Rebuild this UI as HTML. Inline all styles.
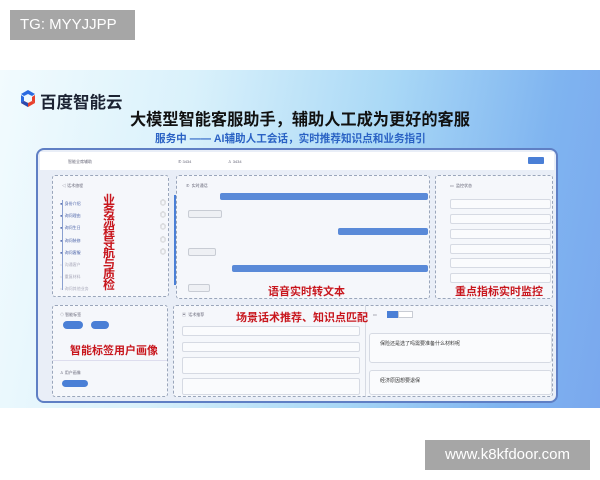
<!DOCTYPE html>
<html><head><meta charset="utf-8"><style>
*{margin:0;padding:0;box-sizing:border-box}
body{width:600px;height:480px;background:#fff;position:relative;overflow:hidden;font-family:"Liberation Sans","Noto Sans CJK SC",sans-serif}
.a{position:absolute}
.banner{left:0;top:70px;width:600px;height:338px;background:linear-gradient(100deg,#f2fbfe 0%,#d9f1fb 30%,#a9d8f6 60%,#7fb4f0 85%,#7aa8ee 100%)}
.dash{position:absolute;border:1px dashed #9aa6bb;background:#f5f7fb;border-radius:3px}
.sm{position:absolute;font-size:4px;color:#667}
.red{position:absolute;color:#c8161d;font-weight:bold;font-size:11px;white-space:nowrap}
.bub{position:absolute;background:#5a8ad8;height:7px;border-radius:2px}
.gb{position:absolute;background:#eef0f4;border:1px solid #c8ccd4;height:8px;border-radius:2px}
.row{position:absolute;left:12px;width:102px;height:10px;border:1px solid #d6dae3;background:#fafbfd;border-radius:2px}
</style></head><body>
<div class="a banner"></div>
<div class="a" style="left:20px;top:90px;width:16px;height:16px">
<svg width="16" height="17" viewBox="0 0 16 17"><path d="M8 0L15 4L12 6L8 4L4 6L1 4Z" fill="#2a6ae0"/><path d="M1 5L4 7L4 11L1 13Z" fill="#2a6ae0"/><path d="M15 5L12 7L12 11L15 13Z" fill="#e8412c"/><path d="M1 13L4 11L8 13L12 11L15 13L8 17Z" fill="#e8412c"/><path d="M1 13L4 11L8 13L8 17Z" fill="#2a4bb0"/></svg></div>
<div class="a" style="left:40px;top:89px;font-size:16.5px;font-weight:bold;color:#1c2333">百度智能云</div>
<div class="a" style="left:130px;top:106px;font-size:16.2px;font-weight:bold;color:#111;white-space:nowrap">大模型智能客服助手，辅助人工成为更好的客服</div>
<div class="a" style="left:155px;top:131px;font-size:10.6px;font-weight:bold;color:#2a62c4;white-space:nowrap">服务中 —— AI辅助人工会话，实时推荐知识点和业务指引</div>
<div class="a" style="left:36px;top:148px;width:522px;height:255px;border:2px solid #5f7fc4;border-radius:8px;background:#e9eef7"></div>
<div class="a" style="left:40px;top:152px;width:514px;height:18px;background:#fff"></div>
<div class="sm" style="left:68px;top:159px">智能全席辅助</div>
<div class="sm" style="left:178px;top:159px">✆ 3434</div>
<div class="sm" style="left:228px;top:159px">♙ 3434</div>
<div class="a" style="left:528px;top:157px;width:16px;height:7px;background:#4a7fd6;border-radius:1px"></div>
<div class="dash" style="left:52px;top:175px;width:117px;height:122px"></div>
<div class="sm" style="left:62px;top:183px">◁ 话术旅程</div>
<div class="a" style="left:62px;top:200px;width:1px;height:90px;background:#8aa0d0"></div>
<div class="sm" style="left:60px;top:198px;line-height:12.2px;color:#4a62a8">●&nbsp; 身份介绍<br>●&nbsp; 询问理由<br>●&nbsp; 询问生日<br>●&nbsp; 询问装修<br>●&nbsp; 询问客服<br><span style="color:#aab">○&nbsp; 沟通客户<br>○&nbsp; 重复材料<br>○&nbsp; 询问其他业务</span></div>
<div class="sm" style="left:160px;top:198px;line-height:12.2px;font-size:6px;color:#999">◎<br>◎<br>◎<br>◎<br>◎</div>
<div class="red" style="left:103px;top:195px;width:13px;font-size:12px;line-height:10.6px;white-space:normal">业务流程导航与质检</div>
<div class="dash" style="left:176px;top:175px;width:254px;height:124px"></div>
<div class="a" style="left:174px;top:195px;width:2px;height:90px;background:#4a7fd6"></div>
<div class="sm" style="left:186px;top:183px">✆ &nbsp;实时通话</div>
<div class="bub" style="left:220px;top:193px;width:208px"></div>
<div class="gb" style="left:188px;top:210px;width:34px"></div>
<div class="bub" style="left:338px;top:228px;width:90px"></div>
<div class="gb" style="left:188px;top:248px;width:28px"></div>
<div class="bub" style="left:232px;top:265px;width:196px"></div>
<div class="gb" style="left:188px;top:284px;width:22px"></div>
<div class="red" style="left:268px;top:283px">语音实时转文本</div>
<div class="dash" style="left:435px;top:175px;width:118px;height:124px"></div>
<div class="sm" style="left:450px;top:183px">▭ &nbsp;监控状态</div>
<div class="row" style="left:450px;top:199px;width:101px"></div>
<div class="row" style="left:450px;top:214px;width:101px"></div>
<div class="row" style="left:450px;top:229px;width:101px"></div>
<div class="row" style="left:450px;top:244px;width:101px"></div>
<div class="row" style="left:450px;top:258px;width:101px"></div>
<div class="row" style="left:450px;top:273px;width:101px"></div>
<div class="red" style="left:455px;top:283px">重点指标实时监控</div>
<div class="dash" style="left:52px;top:305px;width:116px;height:92px"></div>
<div class="sm" style="left:60px;top:312px">◇ 智能标签</div>
<div class="a" style="left:63px;top:321px;width:20px;height:8px;background:#4a7fd6;border-radius:4px"></div>
<div class="a" style="left:91px;top:321px;width:18px;height:8px;background:#4a7fd6;border-radius:4px"></div>
<div class="red" style="left:70px;top:342px">智能标签用户画像</div>
<div class="a" style="left:53px;top:360px;width:114px;height:1px;background:#dde"></div>
<div class="sm" style="left:60px;top:370px">♙ 用户画像</div>
<div class="a" style="left:62px;top:380px;width:26px;height:7px;background:#4a7fd6;border-radius:4px"></div>
<div class="dash" style="left:173px;top:305px;width:380px;height:92px"></div>
<div class="a" style="left:365px;top:306px;width:1px;height:90px;background:#d6dae3"></div>
<div class="sm" style="left:182px;top:312px">▣ &nbsp;话术推荐</div>
<div class="red" style="left:236px;top:309px">场景话术推荐、知识点匹配</div>
<div class="a" style="left:182px;top:326px;width:178px;height:10px;border:1px solid #d6dae3;background:#fafbfd;border-radius:2px"></div>
<div class="a" style="left:182px;top:342px;width:178px;height:10px;border:1px solid #d6dae3;background:#fafbfd;border-radius:2px"></div>
<div class="a" style="left:182px;top:357px;width:178px;height:17px;border:1px solid #d6dae3;background:#fafbfd;border-radius:2px"></div>
<div class="a" style="left:182px;top:378px;width:178px;height:17px;border:1px solid #d6dae3;background:#fafbfd;border-radius:2px"></div>
<div class="sm" style="left:373px;top:312px">▭</div>
<div class="a" style="left:387px;top:311px;width:11px;height:7px;background:#4a7fd6"></div>
<div class="a" style="left:398px;top:311px;width:15px;height:7px;border:1px solid #c8ccd4;background:#fff"></div>
<div class="a" style="left:369px;top:333px;width:183px;height:30px;border:1px solid #d6dae3;background:#fafbfd;border-radius:3px"></div>
<div class="sm" style="left:380px;top:340px;font-size:5px;color:#333">保险还是选了吗需要准备什么材料呢</div>
<div class="a" style="left:369px;top:370px;width:183px;height:25px;border:1px solid #d6dae3;background:#fafbfd;border-radius:3px"></div>
<div class="sm" style="left:380px;top:377px;font-size:5px;color:#333">经济原因想要退保</div>
<div class="a" style="left:10px;top:10px;width:125px;height:30px;background:#a6a6a6;color:#fff;font-size:15px;line-height:30px;padding-left:10px">TG: MYYJJPP</div>
<div class="a" style="left:425px;top:440px;width:165px;height:30px;background:#a6a6a6;color:#fff;font-size:15px;line-height:30px;text-align:center">www.k8kfdoor.com</div>
</body></html>
